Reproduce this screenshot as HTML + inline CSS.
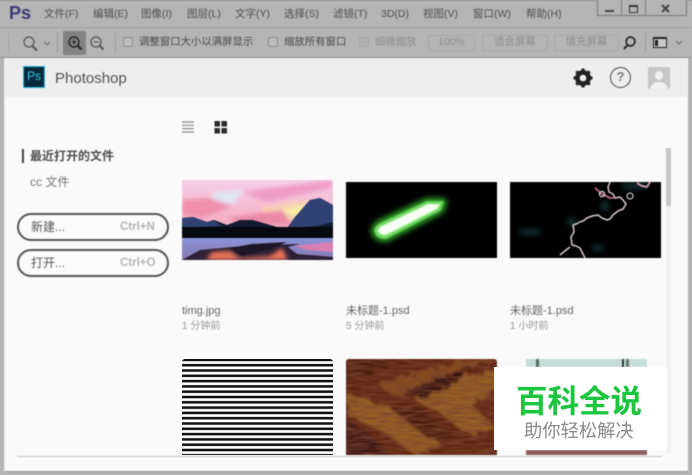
<!DOCTYPE html>
<html><head><meta charset="utf-8"><style>
*{box-sizing:border-box}
html,body{margin:0;padding:0}
body{width:692px;height:475px;overflow:hidden;background:#b4b4b4;position:relative;font-family:"Liberation Sans","Noto Sans CJK SC",sans-serif}
.a{position:absolute;white-space:nowrap}
.m{top:7px;font-size:10.5px;line-height:14px;color:#505050}
.t{top:36px;font-size:10.4px;line-height:14px;color:#4a4a4a}
.cb{position:absolute;top:37px;width:10px;height:10px;border:1px solid #8a8a8a;background:#bdbdbd;border-radius:2px}
.b{position:absolute;top:35px;height:16px;border:1px solid #a6a6a6;border-radius:2px;font-size:10.4px;line-height:14px;color:#8d8d8d;text-align:center;background:#b4b4b4}
.pill{position:absolute;left:17px;width:152px;height:28px;border:2px solid #555;border-radius:14px;background:#fbfbfb}
.n{font-size:11px;line-height:14px;color:#666}
.d{font-size:10px;line-height:13px;color:#999}
</style></head><body>
<div style="position:absolute;inset:0;filter:blur(.4px)">
<div class="a" style="left:0;top:27px;width:692px;height:1px;background:#a2a2a2"></div>
<div class="a" style="left:0;top:0;width:692px;height:1px;background:#8e8e8e"></div>
<div class="a" style="left:9px;top:1px;font-size:18px;line-height:24px;font-weight:bold;color:#3d3a78">Ps</div>
<div class="a m" style="left:44px">文件(F)</div>
<div class="a m" style="left:93px">编辑(E)</div>
<div class="a m" style="left:141px">图像(I)</div>
<div class="a m" style="left:187px">图层(L)</div>
<div class="a m" style="left:235px">文字(Y)</div>
<div class="a m" style="left:284px">选择(S)</div>
<div class="a m" style="left:333px">滤镜(T)</div>
<div class="a m" style="left:381px">3D(D)</div>
<div class="a m" style="left:423px">视图(V)</div>
<div class="a m" style="left:473px">窗口(W)</div>
<div class="a m" style="left:526px">帮助(H)</div>
<div class="a" style="left:597px;top:0;width:90px;height:16px;border:1px solid #777;border-top:0;background:#b4b4b4"></div>
<div class="a" style="left:621px;top:0;width:1px;height:16px;background:#777"></div>
<div class="a" style="left:645px;top:0;width:1px;height:16px;background:#777"></div>
<div class="a" style="left:605px;top:10px;width:9px;height:2px;background:#444"></div>
<div class="a" style="left:629px;top:5px;width:9px;height:8px;border:1px solid #333;border-top-width:2px"></div>
<svg class="a" style="left:660px;top:4px" width="12" height="10"><path d="M2 1L9 8M9 1L2 8" stroke="#444" stroke-width="2"/></svg>

<div class="a" style="left:1px;top:28px;width:690px;height:30px;background:#b4b4b4;border-bottom:1px solid #8f8f8f"></div>
<div class="a" style="left:8px;top:33px;width:1px;height:20px;background:#a4a4a4"></div>
<svg class="a" style="left:21px;top:35px" width="18" height="18" fill="none" stroke="#555"><circle cx="8" cy="7" r="5" stroke-width="1.2"/><path d="M11.5 11L16 15.5" stroke-width="2"/></svg>
<svg class="a" style="left:42px;top:40px" width="10" height="7" fill="none" stroke="#666"><path d="M2 2L5 5L8 2"/></svg>
<div class="a" style="left:57px;top:33px;width:1px;height:20px;background:#9c9c9c"></div>
<div class="a" style="left:63px;top:31px;width:23px;height:24px;background:#838383;border-radius:1px"></div>
<svg class="a" style="left:66px;top:34px" width="18" height="18" fill="none" stroke="#262626"><circle cx="8" cy="8" r="5" stroke-width="1.4"/><path d="M11.5 11.5L15.5 15.5" stroke-width="2"/><path d="M5.5 8H10.5M8 5.5V10.5"/></svg>
<svg class="a" style="left:89px;top:34px" width="18" height="18" fill="none" stroke="#555"><circle cx="7" cy="8" r="5" stroke-width="1.3"/><path d="M10.5 11.5L14.5 15.5" stroke-width="2"/><path d="M4.5 8H9.5"/></svg>
<div class="a" style="left:115px;top:33px;width:1px;height:20px;background:#a0a0a0"></div>
<div class="cb" style="left:123px"></div>
<div class="a t" style="left:139px">调整窗口大小以满屏显示</div>
<div class="cb" style="left:268px"></div>
<div class="a t" style="left:284px">缩放所有窗口</div>
<div class="cb" style="left:359px;background:#b0b0b0;border-color:#a6a6a6"></div>
<div class="a t" style="left:375px;color:#8d8d8d">细微缩放</div>
<div class="b" style="left:428px;width:47px">100%</div>
<div class="b" style="left:482px;width:66px">适合屏幕</div>
<div class="b" style="left:554px;width:65px">填充屏幕</div>
<svg class="a" style="left:622px;top:35px" width="16" height="16" fill="none" stroke="#1f1f1f"><circle cx="8.5" cy="6.5" r="4.4" stroke-width="1.6"/><path d="M5.5 10L2 14" stroke-width="2"/></svg>
<div class="a" style="left:645px;top:33px;width:1px;height:20px;background:#9c9c9c"></div>
<div class="a" style="left:653px;top:37px;width:14px;height:11px;border:1px solid #222;border-top-width:2px;background:#c8c8c8"></div>
<div class="a" style="left:655px;top:40px;width:3px;height:6px;background:#222"></div>
<svg class="a" style="left:674px;top:39px" width="10" height="7" fill="none" stroke="#666"><path d="M2 2L5 5L8 2"/></svg>

<!-- main -->
<div class="a" style="left:4px;top:58px;width:684px;height:414px;background:#fafafa;border-left:1px solid #eee;border-bottom:1px solid #999"></div>
<div class="a" style="left:5px;top:58px;width:682px;height:39px;background:#eeeeee"></div>
<div class="a" style="left:23px;top:66px;width:22px;height:22px;background:#062a3a;border:1.5px solid #2fb8dc;color:#3fc4ea;font-size:12px;line-height:18px;text-align:center">Ps</div>
<div class="a" style="left:55px;top:69px;font-size:15px;line-height:19px;color:#505050">Photoshop</div>
<svg class="a" style="left:572px;top:67px" width="22" height="22"><circle cx="11" cy="11" r="6" fill="none" stroke="#222" stroke-width="4"/><path d="M11 1.5V20.5M1.5 11H20.5M4.3 4.3L17.7 17.7M17.7 4.3L4.3 17.7" stroke="#222" stroke-width="3"/><circle cx="11" cy="11" r="3.3" fill="#eee"/></svg>
<div class="a" style="left:610px;top:67px;width:21px;height:21px;border:1.5px solid #444;border-radius:50%;color:#777;font-size:13px;font-weight:bold;line-height:18px;text-align:center">?</div>
<div class="a" style="left:648px;top:67px;width:22px;height:22px;background:#c6c6c6;border-radius:2px;overflow:hidden"><div style="position:absolute;left:7px;top:4px;width:8px;height:9px;background:#f1f1f1;border-radius:50%"></div><div style="position:absolute;left:2px;top:15px;width:18px;height:8px;background:#f1f1f1;border-radius:8px 8px 0 0"></div></div>

<svg class="a" style="left:181px;top:120px" width="14" height="14"><path d="M1 2H13M1 5.3H13M1 8.6H13M1 12H13" stroke="#8a8a8a" stroke-width="1.2"/></svg>
<svg class="a" style="left:214px;top:120px" width="14" height="14" fill="#2c2c2c"><rect x="0.5" y="1" width="5.5" height="5.5"/><rect x="7.5" y="1" width="5.5" height="5.5"/><rect x="0.5" y="8" width="5.5" height="5.5"/><rect x="7.5" y="8" width="5.5" height="5.5"/></svg>

<div class="a" style="left:22px;top:149px;width:2px;height:14px;background:#444"></div>
<div class="a" style="left:30px;top:149px;font-size:12px;line-height:15px;font-weight:bold;color:#4d4d4d">最近打开的文件</div>
<div class="a" style="left:30px;top:175px;font-size:12px;line-height:15px;color:#777">cc 文件</div>
<div class="pill" style="top:213px"></div>
<div class="a" style="left:31px;top:220px;font-size:12px;line-height:15px;color:#555">新建...</div>
<div class="a" style="left:120px;top:220px;font-size:11.5px;line-height:14px;font-weight:bold;color:#b5b5b5">Ctrl+N</div>
<div class="pill" style="top:249px"></div>
<div class="a" style="left:31px;top:256px;font-size:12px;line-height:15px;color:#555">打开...</div>
<div class="a" style="left:120px;top:256px;font-size:11.5px;line-height:14px;font-weight:bold;color:#b5b5b5">Ctrl+O</div>

<!-- sunset -->
<svg class="a" style="left:182px;top:180px" width="151" height="80" viewBox="0 0 151 80">
<defs><linearGradient id="s" x1="0" y1="0" x2="0" y2="1"><stop offset="0" stop-color="#f5cfe8"/><stop offset=".5" stop-color="#f6bcd2"/><stop offset="1" stop-color="#f2a8bc"/></linearGradient>
<linearGradient id="w" x1="0" y1="0" x2="0" y2="1"><stop offset="0" stop-color="#8b94d8"/><stop offset="1" stop-color="#8577b0"/></linearGradient><filter id="bl"><feGaussianBlur stdDeviation="2"/></filter></defs>
<rect width="151" height="50" fill="url(#s)"/>
<g filter="url(#bl)"><path d="M32 12L62 10L52 24L28 22Z" fill="#dfe6f6"/><path d="M0 20L28 18L50 26L20 38L0 34Z" fill="#ee8fac"/><path d="M60 12L150 0V8L85 22Z" fill="#ee9cc4"/><path d="M78 28L125 20L122 40L92 38Z" fill="#f8d5b0"/><path d="M100 30L125 26L118 38Z" fill="#faf0a6"/><path d="M45 38L100 30L110 44L60 44Z" fill="#ea88a6"/></g>
<path d="M0 38L11 37L25 42L32 40L45 45L58 40L71 40L95 47L106 47L113 37L128 20L138 18L151 25V60H0Z" fill="#131b30"/>
<path d="M0 38L11 37L25 42L32 41L40 46L15 47L0 48Z M113 37L128 20L138 18L151 25V42L135 46L106 48Z" fill="#2f4273"/>
<rect y="47" width="151" height="11" fill="#07090e"/>
<rect y="58" width="151" height="22" fill="url(#w)"/>
<path d="M0 80L18 70L50 67L80 65L118 64L106 67L115 74L151 77V80Z" fill="#2e2136"/>
<path d="M24 80L30 72L48 71L58 78L88 76L100 68L106 80Z" fill="#ec7458" filter="url(#bl)"/>
<path d="M48 68L70 64L105 62L86 70L60 76Z" fill="#1c1626"/>
<path d="M112 66L151 62V72L125 70Z" fill="#d97eb2"/>
</svg>
<!-- green -->
<svg class="a" style="left:346px;top:182px" width="151" height="76" viewBox="0 0 151 76">
<defs><filter id="g1" x="-30%" y="-60%" width="160%" height="220%"><feGaussianBlur stdDeviation="3"/></filter><filter id="g2"><feGaussianBlur stdDeviation=".9"/></filter></defs>
<rect width="151" height="76" fill="#000"/>
<path d="M36 41L81 20H97L94 28L40 56Q30 56 29 48Q30 44 36 41Z" fill="#2f9f28" stroke="#2f9f28" stroke-width="8" stroke-linejoin="round" filter="url(#g1)"/>
<path d="M36 41L81 20H97L94 28L40 56Q30 56 29 48Q30 44 36 41Z" fill="#6fdc5e" stroke="#6fdc5e" stroke-width="1.5" filter="url(#g2)"/>
<path d="M38 43L82 22H94L91 27L40 53Q32 53 32 48Q33 45 38 43Z" fill="#f6fff4" filter="url(#g2)"/>
</svg>
<!-- lightning -->
<svg class="a" style="left:510px;top:182px" width="151" height="76" viewBox="0 0 151 76">
<defs><filter id="t"><feGaussianBlur stdDeviation="3"/></filter></defs>
<rect width="151" height="76" fill="#000"/>
<g fill="#163638" filter="url(#t)"><ellipse cx="20" cy="50" rx="12" ry="3"/><ellipse cx="95" cy="24" rx="4" ry="5"/><ellipse cx="62" cy="40" rx="5" ry="4"/><ellipse cx="88" cy="66" rx="6" ry="3"/><ellipse cx="125" cy="4" rx="14" ry="3"/></g>
<g fill="none" stroke-linejoin="round">
<path d="M100 0L98 5L99 10L103 12L105 16L110 15L113 18L116 22L113 27L108 29L103 33L100 37L97 38L92 36L88 33L82 34L77 36L73 39L70 40L66 42L63 43L64 50L61 55L62 63L66 64L70 66L72 70L75 76M60 65L56 68L50 73" stroke="#d8c8cc" stroke-width="1.5"/>
<path d="M85 6L92 12L100 16L105 16" stroke="#d66f88" stroke-width="1.6"/>
<circle cx="92" cy="12" r="2.6" stroke="#eee" stroke-width="1.1"/><circle cx="120" cy="14" r="3" stroke="#ddd" stroke-width="1.1"/>
<path d="M127 1L132 4L137 5L140 0" stroke="#d8a8b4" stroke-width="1.8"/>
</g></svg>

<!-- names -->
<div class="a n" style="left:182px;top:304px">timg.jpg</div>
<div class="a d" style="left:182px;top:320px">1 分钟前</div>
<div class="a n" style="left:346px;top:304px">未标题-1.psd</div>
<div class="a d" style="left:346px;top:320px">5 分钟前</div>
<div class="a n" style="left:510px;top:304px">未标题-1.psd</div>
<div class="a d" style="left:510px;top:320px">1 小时前</div>

<!-- wood -->
<svg class="a" style="left:346px;top:359px;border-radius:3px 3px 0 0" width="151" height="96" viewBox="0 0 151 96">
<defs><filter id="wf" x="0" y="0" width="100%" height="100%"><feTurbulence type="fractalNoise" baseFrequency=".06 .45" numOctaves="3" seed="7"/><feColorMatrix values="0 0 0 0 .2  0 0 0 0 .06  0 0 0 0 .03  2 0 0 0 -.55"/></filter>
<filter id="b3" x="-10%" y="-10%" width="120%" height="120%"><feTurbulence type="fractalNoise" baseFrequency=".12" numOctaves="3" seed="3" result="n"/><feDisplacementMap in="SourceGraphic" in2="n" scale="12"/><feGaussianBlur stdDeviation="1.2"/></filter></defs>
<rect width="151" height="96" fill="#5e2410"/>
<g filter="url(#b3)"><path d="M0 35L40 45L70 62L95 85L70 96L40 75L0 55Z" fill="#9a6420"/><path d="M70 42L110 20L151 10V30L125 45L151 70L120 75L95 55Z" fill="#9a6424"/><path d="M30 25L110 3L151 0L100 15L50 38Z" fill="#8a4e1a"/><path d="M0 0H60L0 25Z" fill="#4a1c10"/><path d="M0 60L30 80L45 96H0Z" fill="#3d1414"/><path d="M60 30L130 8L90 35L75 40Z" fill="#2f0e0c"/><path d="M45 50L70 45L110 80L85 82Z" fill="#4a1c0c"/></g>
<rect width="151" height="96" filter="url(#wf)" opacity=".85"/>
</svg>
<!-- third -->
<div class="a" style="left:526px;top:359px;width:121px;height:8px;background:#c4ddd8"></div>
<div class="a" style="left:536px;top:359px;width:3px;height:8px;background:#5a6a64"></div>
<div class="a" style="left:622px;top:359px;width:2px;height:8px;background:#333"></div>
<div class="a" style="left:626px;top:359px;width:3px;height:8px;background:#68736f"></div>
<div class="a" style="left:526px;top:450px;width:121px;height:5px;background:#8f5f60"></div>

<!-- scrollbar -->
<div class="a" style="left:666px;top:148px;width:5px;height:306px;background:#f1f1f1"></div>
<div class="a" style="left:666px;top:148px;width:5px;height:58px;background:#c6c6c6"></div>
<!-- bottom rule -->
<div class="a" style="left:17px;top:456px;width:645px;height:1px;background:#c4c4c4"></div>
</div>
<!-- stripes -->
<div class="a" style="left:182px;top:359px;width:151px;height:96px;border-radius:3px 3px 0 0;background:repeating-linear-gradient(180deg,#111 0,#111 1.8px,#bbb 2.3px,#fff 2.9px,#fff 4.4px,#bbb 4.8px,#111 5.3px)"></div>
<!-- watermark -->
<div class="a" style="left:494px;top:367px;width:173px;height:83px;background:#fff"></div>
<div class="a" style="left:516px;top:382px;font-size:31.5px;line-height:38px;font-weight:bold;color:#1bc53d">百科全说</div>
<div class="a" style="left:524px;top:420px;font-size:18.3px;line-height:21px;color:#8a8a8a">助你轻松解决</div>
</body></html>
